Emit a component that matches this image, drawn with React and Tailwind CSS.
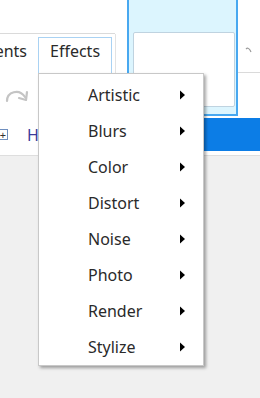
import React from "react";

const items = ["Artistic", "Blurs", "Color", "Distort", "Noise", "Photo", "Render", "Stylize"];

function Arrow() {
  return (
    <svg width="7" height="10" viewBox="0 0 7 10" className="block">
      <path d="M1 0.5 L6 5 L1 9.5 Z" fill="#000" />
    </svg>
  );
}

export default function App() {
  const font = { fontFamily: '"Noto Sans", "Open Sans", sans-serif' };
  return (
    <div className="relative w-[260px] h-[398px] overflow-hidden bg-[#f0f0f0] text-[#2a2a2a]" style={font}>
      {/* top white area */}
      <div className="bg-white">
        <div className="flex h-[118px]">
          {/* left column */}
          <div className="w-[131px] flex flex-col">
            <div className="h-[33px]" />
            <div className="h-px bg-[#dadada] w-[115px]" />
            <div className="flex h-[39px] relative">
              <div className="w-[38px] pt-[7px] pr-[11px] text-[16px] leading-[20px] overflow-hidden whitespace-nowrap flex justify-end">
                <span className="block">ents</span>
              </div>
              <div className="w-[74px] mt-[3px] border border-b-0 border-[#a9d2f3] pt-[3px] pl-[11px] text-[16px] leading-[20px]">
                Effects
              </div>
              <div className="w-px ml-[3px] bg-[#e3e3e3]" />
            </div>
            <div className="flex-1 pl-[4px] pt-[12px]">
              <svg width="26" height="20" viewBox="0 0 26 20">
                <path d="M3 16 C3 7 15 3 21 12" fill="none" stroke="#c4c4c4" strokeWidth="2.2" strokeLinecap="round" />
                <path d="M23 7 L22 15 L15 13" fill="none" stroke="#c4c4c4" strokeWidth="2.2" strokeLinecap="round" strokeLinejoin="round" />
              </svg>
            </div>
          </div>
          {/* cyan gallery panel */}
          <div className="w-[114px] h-[116px] bg-[#dcf5fe] border-x-2 border-b-2 border-[#48a8f0] pl-[4px] pt-[32px]">
            <div className="w-[102px] h-[75px] bg-white border border-[#bfd3e0] rounded-[2px]" />
          </div>
          {/* right bit */}
          <div className="flex-1 flex flex-col">
            <div className="h-[46px]" />
            <svg width="15" height="10" viewBox="0 0 15 10" className="ml-[7px]">
              <path d="M1 3 Q3 1 5 4 L6 6" fill="none" stroke="#9a9a9a" strokeWidth="1.2" />
            </svg>
            <div className="h-[16px]" />
            <div className="h-px bg-[#dadada]" />
          </div>
        </div>
        {/* row with tree item and selection bar */}
        <div className="flex h-[33px] items-stretch">
          <div className="w-[60px] flex items-center">
            <div className="w-[9px] h-[11px] border border-[#6f8fbf] border-l-0 flex items-center justify-center text-[11px] leading-none text-[#333] -ml-[1px]">
              +
            </div>
            <span className="ml-[19px] text-[16px] text-[#3b3b9a]">H</span>
          </div>
          <div className="flex-1 bg-[#0c7de6]" />
        </div>
        <div className="h-[4px] bg-white" />
      </div>
      <div className="h-px bg-[#dedede]" />

      {/* dropdown menu overlay */}
      <div className="absolute left-[38px] top-[73px] w-[166px] bg-white border border-[#c8c8c8] pt-[3px] shadow-[2px_2px_3px_rgba(0,0,0,0.35)]">
        {items.map((t) => (
          <div key={t} className="h-[36px] flex items-center pl-[49px] pr-[17px]">
            <span className="flex-1 text-[16px] leading-[20px] text-[#2a2a2a]">{t}</span>
            <Arrow />
          </div>
        ))}
      </div>
    </div>
  );
}
